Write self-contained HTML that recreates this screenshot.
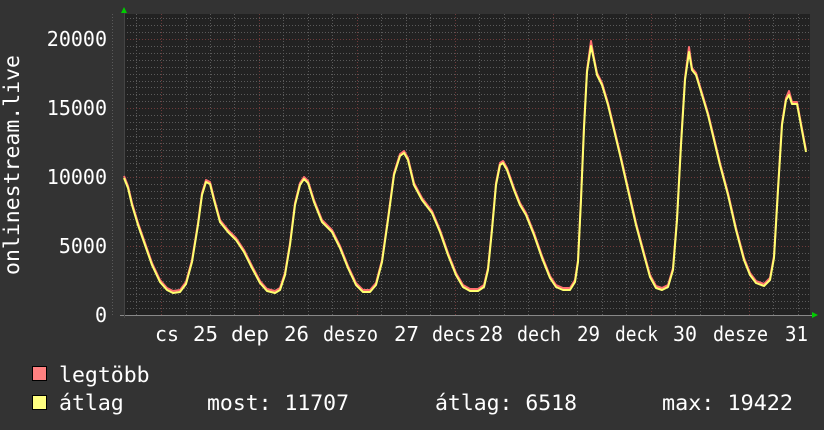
<!DOCTYPE html>
<html><head><meta charset="utf-8"><style>
html,body{margin:0;padding:0;background:#333333;}
svg{display:block}
text{font-family:"DejaVu Sans Mono","Liberation Mono",monospace;fill:#ffffff;font-size:20px}
.lg{font-size:21.5px}
</style></head><body>
<svg width="824" height="430" xmlns="http://www.w3.org/2000/svg">
<rect width="824" height="430" fill="#333333"/>
<rect x="124" y="14" width="686" height="301" fill="#222222"/>
<g stroke="#5a5a5a" stroke-width="1" stroke-dasharray="1,2">
<path d="M124 18.5H810M124 25.5H810M124 32.5H810M124 46.5H810M124 53.5H810M124 60.5H810M124 67.5H810M124 74.5H810M124 81.5H810M124 87.5H810M124 94.5H810M124 101.5H810M124 115.5H810M124 122.5H810M124 129.5H810M124 136.5H810M124 143.5H810M124 150.5H810M124 156.5H810M124 163.5H810M124 170.5H810M124 184.5H810M124 191.5H810M124 198.5H810M124 205.5H810M124 212.5H810M124 219.5H810M124 225.5H810M124 232.5H810M124 239.5H810M124 253.5H810M124 260.5H810M124 267.5H810M124 274.5H810M124 281.5H810M124 288.5H810M124 294.5H810M124 301.5H810M124 308.5H810"/>
<path d="M136.5 14V315M186.5 14V315M210.5 14V315M234.5 14V315M283.5 14V315M308.5 14V315M332.5 14V315M381.5 14V315M406.5 14V315M430.5 14V315M479.5 14V315M504.5 14V315M528.5 14V315M577.5 14V315M602.5 14V315M626.5 14V315M675.5 14V315M700.5 14V315M724.5 14V315M773.5 14V315M798.5 14V315M112.5 14V315"/>
</g>
<g stroke="#6e3a3a" stroke-width="1" stroke-dasharray="1,2">
<path d="M124 39.5H810M124 108.5H810M124 177.5H810M124 246.5H810"/>
<path d="M161.5 14V315M259.5 14V315M357.5 14V315M455.5 14V315M553.5 14V315M651.5 14V315M749.5 14V315"/>
</g>
<path d="M120 315.5H813" stroke="#888" stroke-width="1"/>
<path d="M124.5 12V318" stroke="#444" stroke-width="1"/>
<polygon points="121,13 124,7 127,13" fill="#00cc00"/>
<polygon points="812,312 818,315 812,318" fill="#00cc00"/>
<g fill="none" stroke-linejoin="round" stroke-width="2">
<polyline stroke="#ff7070" transform="translate(0,-2)" points="124,178 128,188 132,205 138,225 145,245 152,265 160,282 167,290 173,293 180,292 186,284 192,262 198,225 202,195 206,182 210,184 214,200 220,222 228,232 236,240 244,252 252,268 260,283 267,291 275,293 280,290 285,275 290,245 295,205 300,185 304,179 308,183 314,202 322,222 332,232 340,248 348,268 356,285 363,292 370,292 376,285 382,262 388,220 394,175 400,156 404,153 408,160 414,185 422,200 432,213 440,232 448,255 456,275 463,287 470,291 478,291 484,287 488,270 492,230 496,185 500,165 503,163 507,170 514,190 520,205 526,215 534,235 542,258 550,278 556,287 563,290 570,290 575,282 578,262 581,200 584,128 587,72 591,43 594,60 597,75 602,85 608,105 614,130 620,155 628,190 636,225 644,255 650,277 656,288 662,290 668,287 673,270 677,220 681,145 685,80 689,49 692,70 696,75 702,95 708,115 714,140 720,165 728,195 736,230 744,260 750,275 756,283 764,286 770,280 774,258 778,190 782,125 786,100 789,93 792,104 797,104 800,120 806,152"/>
<polyline stroke="#ffff70" points="124,178 128,188 132,205 138,225 145,245 152,265 160,282 167,290 173,293 180,292 186,284 192,262 198,225 202,195 206,182 210,184 214,200 220,222 228,232 236,240 244,252 252,268 260,283 267,291 275,293 280,290 285,275 290,245 295,205 300,185 304,179 308,183 314,202 322,222 332,232 340,248 348,268 356,285 363,292 370,292 376,285 382,262 388,220 394,175 400,156 404,153 408,160 414,185 422,200 432,213 440,232 448,255 456,275 463,287 470,291 478,291 484,287 488,270 492,230 496,185 500,165 503,163 507,170 514,190 520,205 526,215 534,235 542,258 550,278 556,287 563,290 570,290 575,282 578,262 581,200 584,128 587,72 591,46 594,60 597,75 602,85 608,105 614,130 620,155 628,190 636,225 644,255 650,277 656,288 662,290 668,287 673,270 677,220 681,145 685,80 689,52 692,70 696,75 702,95 708,115 714,140 720,165 728,195 736,230 744,260 750,275 756,283 764,286 770,280 774,258 778,190 782,125 786,100 789,95 792,104 797,104 800,120 806,152"/>
</g>
<g text-anchor="end">
<text x="107" y="46">20000</text>
<text x="107" y="115">15000</text>
<text x="107" y="184">10000</text>
<text x="107" y="253">5000</text>
<text x="107" y="322">0</text>
</g>
<text class="lg" transform="translate(19,165) rotate(-90)" text-anchor="middle" textLength="220" lengthAdjust="spacingAndGlyphs">onlinestream.live</text>
<g>
<text x="155" y="341" textLength="24" lengthAdjust="spacingAndGlyphs">cs</text>
<text x="193" y="341" textLength="25" lengthAdjust="spacingAndGlyphs">25</text>
<text x="231" y="341" textLength="38" lengthAdjust="spacingAndGlyphs">dep</text>
<text x="284" y="341" textLength="25" lengthAdjust="spacingAndGlyphs">26</text>
<text x="323" y="341" textLength="55" lengthAdjust="spacingAndGlyphs">deszo</text>
<text x="394" y="341" textLength="25" lengthAdjust="spacingAndGlyphs">27</text>
<text x="432" y="341" textLength="44" lengthAdjust="spacingAndGlyphs">decs</text>
<text x="479" y="341" textLength="24" lengthAdjust="spacingAndGlyphs">28</text>
<text x="517" y="341" textLength="44" lengthAdjust="spacingAndGlyphs">dech</text>
<text x="577" y="341" textLength="23" lengthAdjust="spacingAndGlyphs">29</text>
<text x="615" y="341" textLength="43" lengthAdjust="spacingAndGlyphs">deck</text>
<text x="673" y="341" textLength="24" lengthAdjust="spacingAndGlyphs">30</text>
<text x="713" y="341" textLength="55" lengthAdjust="spacingAndGlyphs">desze</text>
<text x="785" y="341" textLength="23" lengthAdjust="spacingAndGlyphs">31</text>
</g>
<rect x="32.5" y="366.5" width="14" height="14" fill="#ff8080" stroke="#000"/>
<rect x="32.5" y="395.5" width="14" height="14" fill="#ffff80" stroke="#000"/>
<text class="lg" x="59" y="382">legtöbb</text>
<text class="lg" x="59" y="410">átlag</text>
<text class="lg" x="207" y="410" textLength="142" lengthAdjust="spacingAndGlyphs">most: 11707</text>
<text class="lg" x="435" y="410" textLength="142" lengthAdjust="spacingAndGlyphs">átlag: 6518</text>
<text class="lg" x="662" y="410" textLength="131" lengthAdjust="spacingAndGlyphs">max: 19422</text>
</svg>
</body></html>
